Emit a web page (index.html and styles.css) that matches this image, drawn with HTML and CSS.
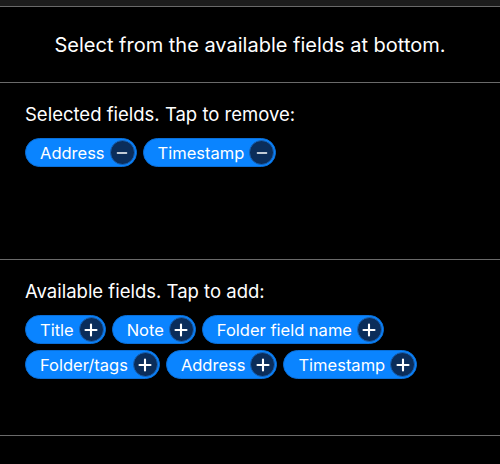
FILE: index.html
```html
<!DOCTYPE html>
<html>
<head>
<meta charset="utf-8">
<link rel="stylesheet" href="styles.css">
</head>
<body>
<div class="topbar"></div>
<div class="header">Select from the available fields at bottom.</div>
<section class="section selected">
  <div class="heading">Selected fields. Tap to remove:</div>
  <div class="pills">
    <span class="pill">Address<span class="btn"><svg viewBox="0 0 24 24"><path d="M7 12h10" /></svg></span></span>
    <span class="pill">Timestamp<span class="btn"><svg viewBox="0 0 24 24"><path d="M7 12h10" /></svg></span></span>
  </div>
</section>
<section class="section available">
  <div class="heading">Available fields. Tap to add:</div>
  <div class="pills">
    <span class="pill">Title<span class="btn"><svg viewBox="0 0 24 24"><path class="plus" d="M6 12h12M12 6v12" /></svg></span></span>
    <span class="pill">Note<span class="btn"><svg viewBox="0 0 24 24"><path class="plus" d="M6 12h12M12 6v12" /></svg></span></span>
    <span class="pill">Folder field name<span class="btn"><svg viewBox="0 0 24 24"><path class="plus" d="M6 12h12M12 6v12" /></svg></span></span>
    <span class="pill">Folder/tags<span class="btn"><svg viewBox="0 0 24 24"><path class="plus" d="M6 12h12M12 6v12" /></svg></span></span>
    <span class="pill">Address<span class="btn"><svg viewBox="0 0 24 24"><path class="plus" d="M6 12h12M12 6v12" /></svg></span></span>
    <span class="pill">Timestamp<span class="btn"><svg viewBox="0 0 24 24"><path class="plus" d="M6 12h12M12 6v12" /></svg></span></span>
  </div>
</section>
</body>
</html>
```

FILE: styles.css
```css
html, body {
  margin: 0;
  padding: 0;
  background: #000;
  color: #fff;
  font-family: Inter, "Liberation Sans", sans-serif;
}
.topbar {
  height: 6px;
  background: #1c1c1c;
  border-bottom: 1px solid #6a6a6a;
}
.header {
  height: 75px;
  display: flex;
  align-items: center;
  justify-content: center;
  font-size: 20px;
  border-bottom: 1px solid #6a6a6a;
}
.section {
  box-sizing: border-box;
  padding: 20px 25px 0;
  border-bottom: 1px solid #6a6a6a;
}
.selected {
  height: 177px;
}
.available {
  height: 176px;
  padding-top: 20px;
}
.heading {
  font-size: 18.5px;
  line-height: 22px;
}
.pills {
  margin-top: 13px;
  display: flex;
  flex-wrap: wrap;
  gap: 6px 6px;
}
.available .pills {
  margin-top: 13px;
}
.pill {
  display: inline-flex;
  align-items: center;
  height: 29px;
  box-sizing: border-box;
  padding: 0 1px 0 14px;
  background: #0a84ff;
  border: 1px solid #0a6fd8;
  border-radius: 15px;
  font-size: 16.5px;
  gap: 5px;
}
.btn {
  width: 25px;
  height: 25px;
  box-sizing: border-box;
  border-radius: 50%;
  background: #0b2d5a;
  border: 1px solid #1763b8;
  display: flex;
  align-items: center;
  justify-content: center;
}
.btn svg {
  width: 22px;
  height: 22px;
  fill: none;
  stroke: #fff;
  stroke-width: 1.6;
  stroke-linecap: round;
}
.btn svg .plus {
  stroke-width: 2.3;
}
```
